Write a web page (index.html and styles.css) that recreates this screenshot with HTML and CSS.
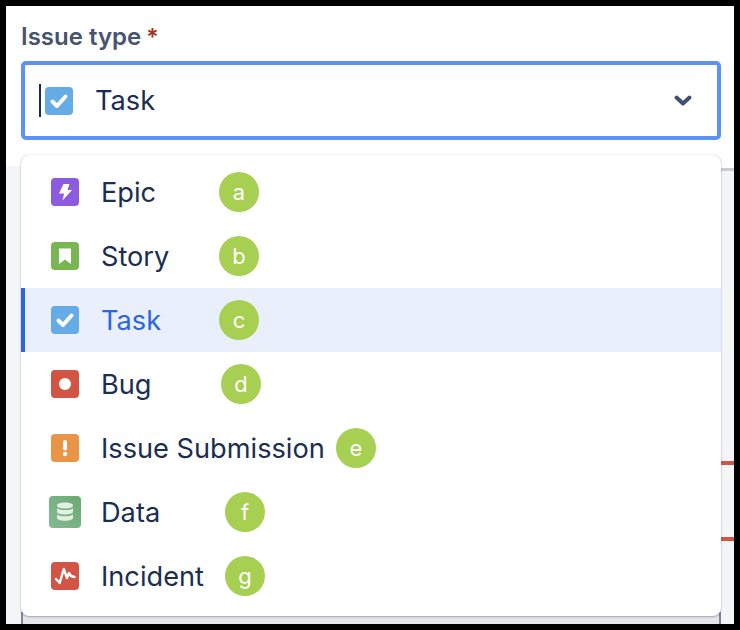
FILE: index.html
```html
<!DOCTYPE html>
<html lang="en">
<head>
  <meta charset="UTF-8" />
  <title>Issue type</title>
  <link rel="stylesheet" href="styles.css">
</head>
<body>

<div class="frame">
  <div class="field">
    <div class="field-label">Issue type<span class="required">*</span></div>
    <div class="select-box">
      <span class="caret"></span>
      <svg class="type-icon" viewBox="0 0 28 28"><rect width="28" height="28" rx="4" fill="#65abe5"/><path d="M7.500 14.500l4.500 4.500L20.500 9.500" fill="none" stroke="#fff" stroke-width="4" stroke-linecap="round" stroke-linejoin="round"/></svg>
      <span class="select-value">Task</span>
      <svg class="chevron" viewBox="0 0 20 14"><path d="M3.500 3.500l6.500 6 6.500-6" fill="none" stroke="#42526e" stroke-width="4" stroke-linecap="round" stroke-linejoin="round"/></svg>
    </div>
  </div>

  <div class="backdrop">
    <div class="backdrop-rule"></div>
    <div class="mark mark-top"></div>
    <div class="mark mark-bottom"></div>
    <div class="backdrop-edge"></div>
  </div>

  <ul class="menu">
    <li class="option">
      <svg class="type-icon" viewBox="0 0 28 28"><rect width="28" height="28" rx="4" fill="#8d5bdf"/><path d="M12.500 6h6l-2 6H21L11.500 22.500 13 15.500H8z" fill="#fff"/></svg>
      <span class="option-text">Epic</span>
      <span class="badge">a</span>
    </li>
    <li class="option">
      <svg class="type-icon" viewBox="0 0 28 28"><rect width="28" height="28" rx="4" fill="#78b651"/><path d="M8 6.500h12v15.500l-6-4.500-6 4.500z" fill="#fff"/></svg>
      <span class="option-text">Story</span>
      <span class="badge">b</span>
    </li>
    <li class="option option-active">
      <svg class="type-icon" viewBox="0 0 28 28"><rect width="28" height="28" rx="4" fill="#65abe5"/><path d="M7.500 14.500l4.500 4.500L20.500 9.500" fill="none" stroke="#fff" stroke-width="4" stroke-linecap="round" stroke-linejoin="round"/></svg>
      <span class="option-text">Task</span>
      <span class="badge">c</span>
    </li>
    <li class="option">
      <svg class="type-icon" viewBox="0 0 28 28"><rect width="28" height="28" rx="4" fill="#d15444"/><circle cx="14" cy="14" r="6" fill="#fff"/></svg>
      <span class="option-text">Bug</span>
      <span class="badge badge-d">d</span>
    </li>
    <li class="option">
      <svg class="type-icon" viewBox="0 0 28 28"><rect width="28" height="28" rx="4" fill="#ea9546"/><rect x="12" y="6" width="4" height="10.500" rx="2" fill="#fff"/><circle cx="14" cy="20" r="2.200" fill="#fff"/></svg>
      <span class="option-text">Issue Submission</span>
      <span class="badge badge-e">e</span>
    </li>
    <li class="option">
      <svg class="type-icon type-icon-data" viewBox="0 0 32 32">
        <defs><linearGradient id="dataFill" x1="0" y1="1" x2="1" y2="0"><stop offset="0" stop-color="#86b996"/><stop offset="1" stop-color="#6aaa71"/></linearGradient></defs>
        <rect width="32" height="32" rx="4" fill="url(#dataFill)"/>
        <path d="M8 9.500c0-2 3.600-3 8-3s8 1 8 3-3.600 3-8 3-8-1-8-3z" fill="#e3efe4"/>
        <path d="M8 12.200c1.500 1.300 4.500 1.800 8 1.800s6.500-.5 8-1.800v3.600c0 1.700-3.600 2.700-8 2.700s-8-1-8-2.700z" fill="#e3efe4"/>
        <path d="M8 18.400c1.500 1.300 4.500 1.800 8 1.800s6.500-.5 8-1.800v3.400c0 1.900-3.600 3-8 3s-8-1.100-8-3z" fill="#e3efe4"/>
      </svg>
      <span class="option-text">Data</span>
      <span class="badge badge-f">f</span>
    </li>
    <li class="option">
      <svg class="type-icon" viewBox="0 0 28 28"><rect width="28" height="28" rx="4" fill="#d15444"/><path d="M5 17l3.700 4 4.100-14 3.200 9 2-5 2 3 3.500 1" fill="none" stroke="#fff" stroke-width="2.400" stroke-linecap="round" stroke-linejoin="round"/></svg>
      <span class="option-text">Incident</span>
      <span class="badge badge-f">g</span>
    </li>
  </ul>
</div>

</body>
</html>
```

FILE: styles.css
```css
* {
  box-sizing: border-box;
  margin: 0;
  padding: 0;
  font-family: Inter, "Liberation Sans", sans-serif;
}

body {
  background: #000;
}

.frame {
  position: relative;
  width: 740px;
  height: 630px;
  border: 6px solid #000;
  background: #fff;
  overflow: hidden;
}

.field {
  padding: 15px 13px 0 15px;
}

.field-label {
  display: flex;
  font-size: 24px;
  line-height: 32px;
  font-weight: 600;
  color: #47546f;
}

.required {
  margin-left: 5px;
  color: #a5301c;
  font-size: 23px;
}

.select-box {
  display: flex;
  align-items: center;
  height: 79px;
  margin-top: 8px;
  padding: 0 24px 0 14px;
  border: 4px solid #5a92f5;
  border-radius: 5px;
  background: #fff;
}

.caret {
  width: 2px;
  height: 33px;
  margin-right: 4px;
  background: #172b4d;
}

.type-icon {
  width: 28px;
  height: 28px;
  flex-shrink: 0;
}

.select-value {
  margin-left: 22px;
  font-size: 27.2px;
  color: #1a2d52;
  flex: 1;
}

.chevron {
  width: 20px;
  height: 14px;
}

.backdrop {
  position: absolute;
  left: 0;
  right: 0;
  top: 160px;
  bottom: 0;
  background: #f4f5f7;
}

.backdrop-rule {
  position: absolute;
  right: 0;
  top: 0;
  width: 13px;
  height: 5px;
  background: #fff;
  border-bottom: 3px solid #c9ccd6;
}

.mark {
  position: absolute;
  right: 0;
  width: 13px;
  height: 4px;
  background: #d15444;
}

.mark-top {
  top: 295px;
}

.mark-bottom {
  top: 371px;
}

.backdrop-edge {
  position: absolute;
  left: 15px;
  right: 13px;
  top: 446px;
  bottom: 0;
  border-left: 2px solid #7a869a;
  border-right: 2px solid #7a869a;
  background: #e4e6ea;
}

.menu {
  position: absolute;
  left: 15px;
  top: 149px;
  width: 700px;
  height: 461px;
  padding: 5px 0 8px;
  list-style: none;
  background: #fff;
  border-radius: 8px;
  box-shadow: 0 1px 2px rgba(9, 30, 66, 0.3), 0 0 1px rgba(9, 30, 66, 0.31);
}

.option {
  display: flex;
  align-items: center;
  height: 64px;
  padding-left: 30px;
  font-size: 27.2px;
  color: #1a2d52;
}

.option-active {
  background: #e9f0fb;
  border-left: 4px solid #2d65dd;
  padding-left: 26px;
  color: #2d65dd;
}

.option-text {
  min-width: 118px;
  margin-left: 22px;
}

.type-icon-data {
  width: 32px;
  height: 32px;
  margin-left: -2px;
  margin-right: -2px;
}

.badge {
  display: flex;
  align-items: center;
  justify-content: center;
  width: 40px;
  height: 40px;
  border-radius: 50%;
  background: #a7cf52;
  color: #fff;
  font-size: 22px;
}

.badge-d {
  margin-left: 2px;
}

.badge-e {
  margin-left: 11px;
}

.badge-f {
  margin-left: 6px;
}
```
